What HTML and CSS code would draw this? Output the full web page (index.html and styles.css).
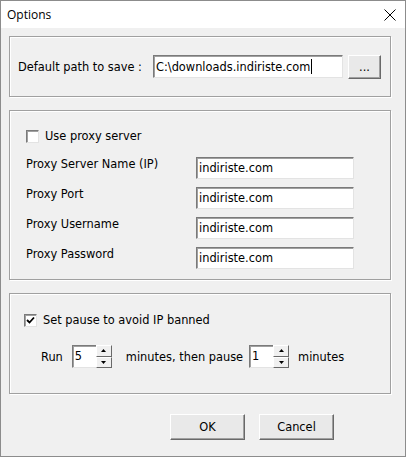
FILE: index.html
```html
<!DOCTYPE html>
<html lang="en">
<head>
  <meta charset="UTF-8" />
  <title>Options</title>
  <link rel="stylesheet" href="styles.css">
</head>
<body>
  <div class="window">
    <div class="titlebar">
      <span class="title">Options</span>
      <svg class="close" width="12" height="12" viewBox="0 0 12 12">
        <path d="M0.5 0.5 L11.5 11.5 M11.5 0.5 L0.5 11.5" stroke="#000" stroke-width="1" fill="none"/>
      </svg>
    </div>

    <div class="client">
      <div class="group group-path">
        <span class="label">Default path to save :</span>
        <div class="field path-field">C:\downloads.indiriste.com<span class="caret"></span></div>
        <div class="btn browse">...</div>
      </div>

      <div class="group group-proxy">
        <div class="check-row">
          <span class="checkbox"></span>
          <span>Use proxy server</span>
        </div>
        <div class="proxy-grid">
          <span class="label">Proxy Server Name (IP)</span>
          <div class="field">indiriste.com</div>
          <span class="label">Proxy Port</span>
          <div class="field">indiriste.com</div>
          <span class="label">Proxy Username</span>
          <div class="field">indiriste.com</div>
          <span class="label">Proxy Password</span>
          <div class="field">indiriste.com</div>
        </div>
      </div>

      <div class="group group-pause">
        <div class="check-row">
          <span class="checkbox checked">
            <svg width="9" height="9" viewBox="0 0 9 9"><path d="M1 4 L3.5 6.5 L8 1.5" stroke="#000" stroke-width="1.8" fill="none"/></svg>
          </span>
          <span>Set pause to avoid IP banned</span>
        </div>
        <div class="run-row">
          <span>Run</span>
          <div class="spin first">
            <div class="field spin-field">5</div>
            <div class="spin-btns">
              <div class="spin-btn"><svg width="5" height="3" viewBox="0 0 5 3"><path d="M2.5 0 L5 3 L0 3 Z" fill="#000"/></svg></div>
              <div class="spin-btn"><svg width="5" height="3" viewBox="0 0 5 3"><path d="M0 0 L5 0 L2.5 3 Z" fill="#000"/></svg></div>
            </div>
          </div>
          <span class="mid">minutes, then pause</span>
          <div class="spin second">
            <div class="field spin-field">1</div>
            <div class="spin-btns">
              <div class="spin-btn"><svg width="5" height="3" viewBox="0 0 5 3"><path d="M2.5 0 L5 3 L0 3 Z" fill="#000"/></svg></div>
              <div class="spin-btn"><svg width="5" height="3" viewBox="0 0 5 3"><path d="M0 0 L5 0 L2.5 3 Z" fill="#000"/></svg></div>
            </div>
          </div>
          <span class="last">minutes</span>
        </div>
      </div>

      <div class="actions">
        <div class="btn big">OK</div>
        <div class="btn big">Cancel</div>
      </div>
    </div>
  </div>
</body>
</html>
```

FILE: styles.css
```css
html, body {
  margin: 0;
  padding: 0;
  background: #f0f0f0;
}
body {
  font-family: Tahoma, 'DejaVu Sans', sans-serif;
  font-size: 11.4px;
  color: #000;
}
.window {
  width: 404px;
  height: 455px;
  border: 1px solid #8c8c8c;
  background: #f0f0f0;
}
.titlebar {
  height: 27px;
  background: #fff;
  display: flex;
  align-items: center;
  justify-content: space-between;
  padding: 0 9px 0 6px;
}
.title {
  font-family: 'Open Sans', 'DejaVu Sans', sans-serif;
  font-size: 12px;
}
.client {
  padding: 8px 0 0 8px;
}
.group {
  width: 382px;
  border: 1px solid #a0a0a0;
  box-shadow: inset 1px 1px 0 #fff, 1px 1px 0 #fff;
  box-sizing: border-box;
}
.group-path {
  height: 61px;
  display: flex;
  align-items: center;
  padding-left: 8px;
}
.group-path .label {
  width: 135px;
}
.field {
  background: #fff;
  border: 1px solid;
  border-color: #7a7a7a #e3e3e3 #e3e3e3 #7a7a7a;
  box-shadow: inset 1px 1px 0 #a0a0a0;
  box-sizing: border-box;
  height: 22px;
  line-height: 20px;
  padding-left: 2px;
  white-space: nowrap;
}
.path-field {
  width: 190px;
  height: 23px;
  display: flex;
  align-items: center;
}
.caret {
  display: inline-block;
  width: 1px;
  height: 15px;
  background: #000;
  margin-left: 1px;
}
.btn {
  background: #e9e9e9;
  border: 1px solid;
  border-color: #fff #696969 #696969 #fff;
  box-shadow: inset -1px -1px 0 #a0a0a0;
  box-sizing: border-box;
  display: flex;
  align-items: center;
  justify-content: center;
}
.browse {
  width: 33px;
  height: 24px;
  margin-left: 5px;
}
.group-proxy {
  margin-top: 13px;
  height: 170px;
  padding: 18px 0 0 16px;
}
.check-row {
  display: flex;
  align-items: center;
  gap: 6px;
}
.checkbox {
  width: 11px;
  height: 11px;
  background: #fff;
  border: 1px solid;
  border-color: #7a7a7a #e3e3e3 #e3e3e3 #7a7a7a;
  box-shadow: inset 1px 1px 0 #a0a0a0;
  display: flex;
  align-items: center;
  justify-content: center;
}
.proxy-grid {
  display: grid;
  grid-template-columns: 170px 158px;
  grid-auto-rows: 22px;
  row-gap: 8px;
  align-items: center;
  margin-top: 14px;
}
.proxy-grid .label {
  align-self: start;
}
.group-pause {
  margin-top: 13px;
  height: 101px;
  padding: 19px 0 0 14px;
}
.run-row {
  display: flex;
  align-items: center;
  margin-top: 18px;
  padding-left: 17px;
}
.spin {
  display: flex;
}
.spin.first {
  margin-left: 9px;
}
.spin.second {
  margin-left: 6px;
}
.spin-field {
  width: 24px;
  height: 23px;
  border-right: none;
}
.spin-btns {
  display: flex;
  flex-direction: column;
  width: 16px;
  height: 23px;
}
.spin-btn {
  flex: 1;
  background: #f0f0f0;
  border: 1px solid;
  border-color: #fff #696969 #696969 #fff;
  box-sizing: border-box;
  display: flex;
  align-items: center;
  justify-content: center;
}
.mid {
  margin-left: 14px;
}
.last {
  margin-left: 9px;
}
.actions {
  display: flex;
  gap: 14px;
  margin-top: 20px;
  padding-left: 161px;
}
.big {
  width: 75px;
  height: 26px;
}
```
